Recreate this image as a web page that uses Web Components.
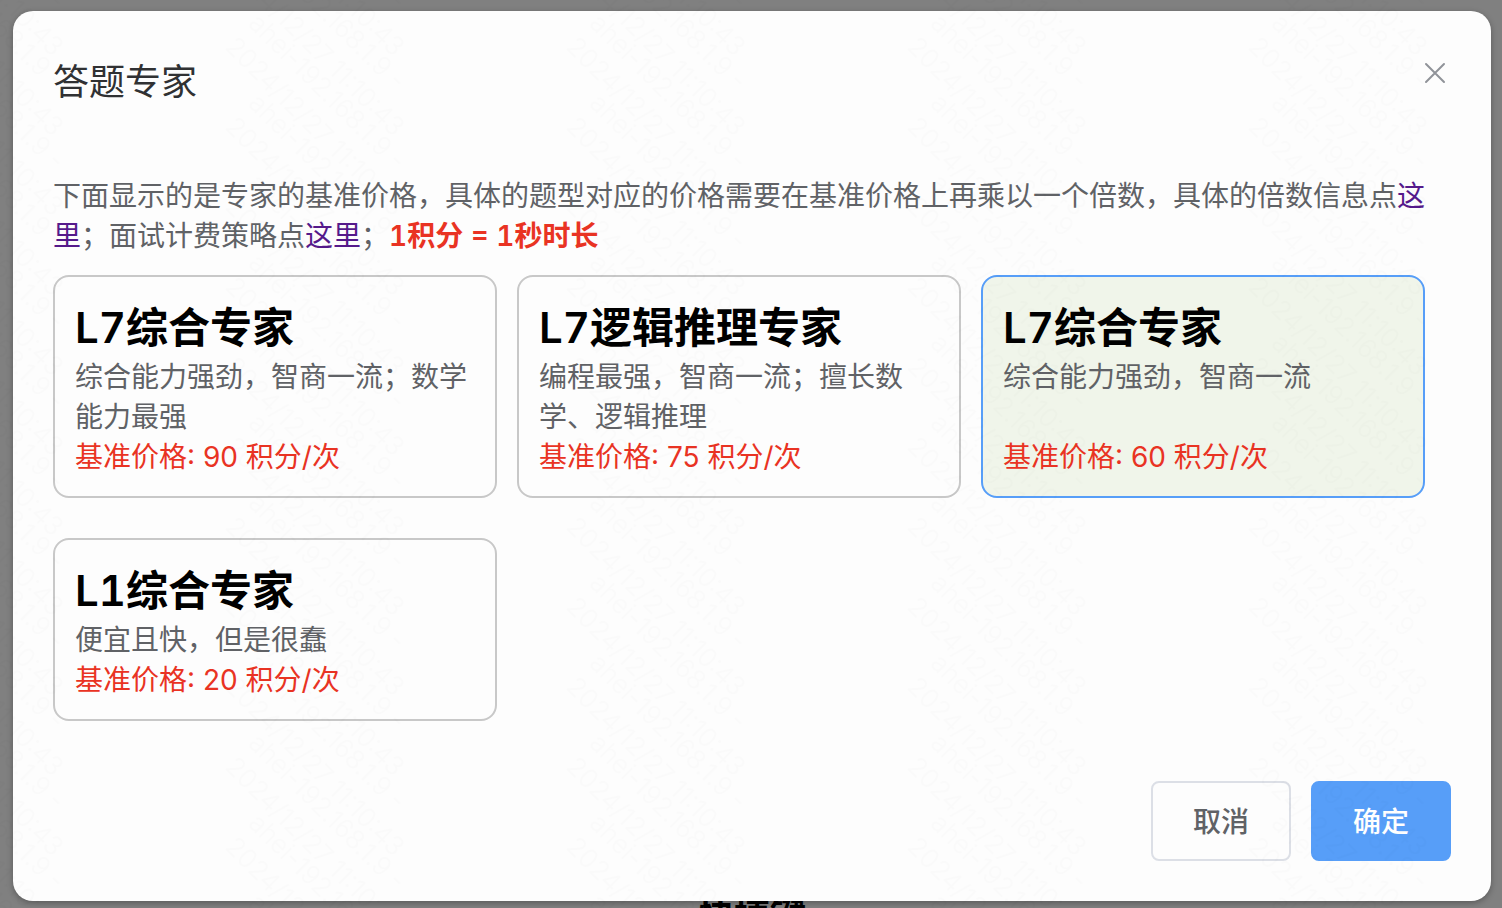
<!DOCTYPE html>
<html lang="zh-CN">
<head>
<meta charset="utf-8">
<title>答题专家</title>
<style>
  html, body { margin: 0; height: 100%; }
  body {
    background: #808080;
    overflow: hidden;
    font-family: Inter, "Noto Sans CJK SC", sans-serif;
    font-size: 28px;
    line-height: 40px;
    color: #606266;
  }
</style>
</head>
<body>
<expert-page></expert-page>
<script>
class WaterMark extends HTMLElement {
  constructor() {
    super();
    let lines = '';
    for (let y = -240; y <= 80; y += 80) {
      lines += `<g transform="translate(224 ${y + 48}) rotate(45)"><text x="0" y="0">2024/12/27 11:10:43</text><text x="0" y="-33">ahei-192.168.1.9 -</text></g>`;
    }
    // Each mark is wider than the gap before the next tile edge, so it is repeated one tile to the left.
    this.attachShadow({ mode: 'open' }).innerHTML = `
      <style>
        :host { position: fixed; inset: 0; z-index: 5; pointer-events: none; }
        svg { display: block; width: 100%; height: 100%; }
        text { font: 300 26px Inter, sans-serif; fill: #000; fill-opacity: .01; }
      </style>
      <svg aria-hidden="true">
        <defs>
          <pattern id="tile" width="341" height="80" patternUnits="userSpaceOnUse">
            ${lines}<g transform="translate(-341 0)">${lines}</g>
          </pattern>
        </defs>
        <rect width="100%" height="100%" fill="url(#tile)"/>
      </svg>`;
  }
}

class ExpertCard extends HTMLElement {
  connectedCallback() {
    const on = this.hasAttribute('selected');
    this.attachShadow({ mode: 'open' }).innerHTML = `
      <style>
        :host { display: flex; }
        button {
          box-sizing: border-box; flex: 1; display: flex; flex-direction: column;
          margin: 0; padding: 21px 20px 19px; border: 2px solid #c8c8c8; border-radius: 16px;
          background: transparent; font: inherit; color: inherit; text-align: left; cursor: pointer;
        }
        button[aria-pressed="true"] { border-color: #579ef8; background: #f0f5ea; }
        .name { font-size: 42px; line-height: 59px; font-weight: 600; font-variant-numeric: tabular-nums; color: #000; }
        .about { flex: 1; }
        .price { color: #e93323; }
      </style>
      <button type="button" aria-pressed="${on}">
        <span class="name"><slot name="name"></slot></span>
        <span class="about"><slot></slot></span>
        <span class="price">基准价格: ${this.getAttribute('price')} 积分/次</span>
      </button>`;
  }
}

class ActionButton extends HTMLElement {
  constructor() {
    super();
    this.attachShadow({ mode: 'open' }).innerHTML = `
      <style>
        :host { display: block; }
        button {
          box-sizing: border-box; display: block; margin: 0; padding: 19px 40px 17px;
          border: 2px solid #dcdfe6; border-radius: 8px; background: transparent;
          font: inherit; font-weight: 500; color: #606266; cursor: pointer;
        }
        :host([primary]) button { background: #579ef8; border-color: #579ef8; color: #fff; }
      </style>
      <button type="button"><slot></slot></button>`;
  }
}

class ModalDialog extends HTMLElement {
  constructor() {
    super();
    this.attachShadow({ mode: 'open' }).innerHTML = `
      <style>
        :host {
          display: block; position: relative; z-index: 1; padding: 40px;
          border-radius: 20px; background: #fdfdfd; box-shadow: 0 2px 6px rgba(0,0,0,.3);
        }
        header { display: flex; justify-content: space-between; align-items: flex-start; margin-bottom: 63px; }
        h2 { margin: 0; font-size: 36px; line-height: 62px; font-weight: 400; color: #303133; }
        .close { display: block; margin: 6px 0 0; padding: 0; border: 0; background: none; cursor: pointer; }
        svg { display: block; width: 32px; height: 32px; }
        footer { display: flex; justify-content: flex-end; gap: 20px; margin-top: 60px; }
      </style>
      <header>
        <h2><slot name="title"></slot></h2>
        <button class="close" type="button" aria-label="关闭">
          <svg viewBox="0 0 32 32" fill="none" stroke="#909399" stroke-width="2" stroke-linecap="round"><path d="M7 7 25 25M25 7 7 25"/></svg>
        </button>
      </header>
      <slot></slot>
      <footer><slot name="actions"></slot></footer>`;
  }
}

class ExpertPage extends HTMLElement {
  constructor() {
    super();
    this.attachShadow({ mode: 'open' }).innerHTML = `
      <style>
        :host { display: block; padding: 11px 11px 0 13px; }
        p { margin: 0 0 19px; }
        a { color: #551a8b; text-decoration: none; }
        strong { font-weight: 600; font-variant-numeric: tabular-nums; color: #e93323; }
        .cards { display: grid; grid-template-columns: repeat(3, 1fr); gap: 40px 20px; padding-right: 26px; }
        .behind { margin: -3px 0 0; font-size: 36px; line-height: 36px; font-weight: 700; text-align: center; color: #000; }
      </style>
      <modal-dialog role="dialog" aria-label="答题专家">
        <span slot="title">答题专家</span>
        <p>下面显示的是专家的基准价格，具体的题型对应的价格需要在基准价格上再乘以一个倍数，具体的倍数信息点<a href="#rates">这里</a>；面试计费策略点<a href="#interview">这里</a>；<strong>1积分 = 1秒时长</strong></p>
        <div class="cards">
          <expert-card price="90"><span slot="name">L7综合专家</span>综合能力强劲，智商一流；数学能力最强</expert-card>
          <expert-card price="75"><span slot="name">L7逻辑推理专家</span>编程最强，智商一流；擅长数学、逻辑推理</expert-card>
          <expert-card price="60" selected><span slot="name">L7综合专家</span>综合能力强劲，智商一流</expert-card>
          <expert-card price="20"><span slot="name">L1综合专家</span>便宜且快，但是很蠢</expert-card>
        </div>
        <action-button slot="actions">取消</action-button>
        <action-button slot="actions" primary>确定</action-button>
      </modal-dialog>
      <h3 class="behind">快捷键</h3>
      <water-mark></water-mark>`;
  }
}

customElements.define('water-mark', WaterMark);
customElements.define('expert-card', ExpertCard);
customElements.define('action-button', ActionButton);
customElements.define('modal-dialog', ModalDialog);
customElements.define('expert-page', ExpertPage);
</script>
</body>
</html>
